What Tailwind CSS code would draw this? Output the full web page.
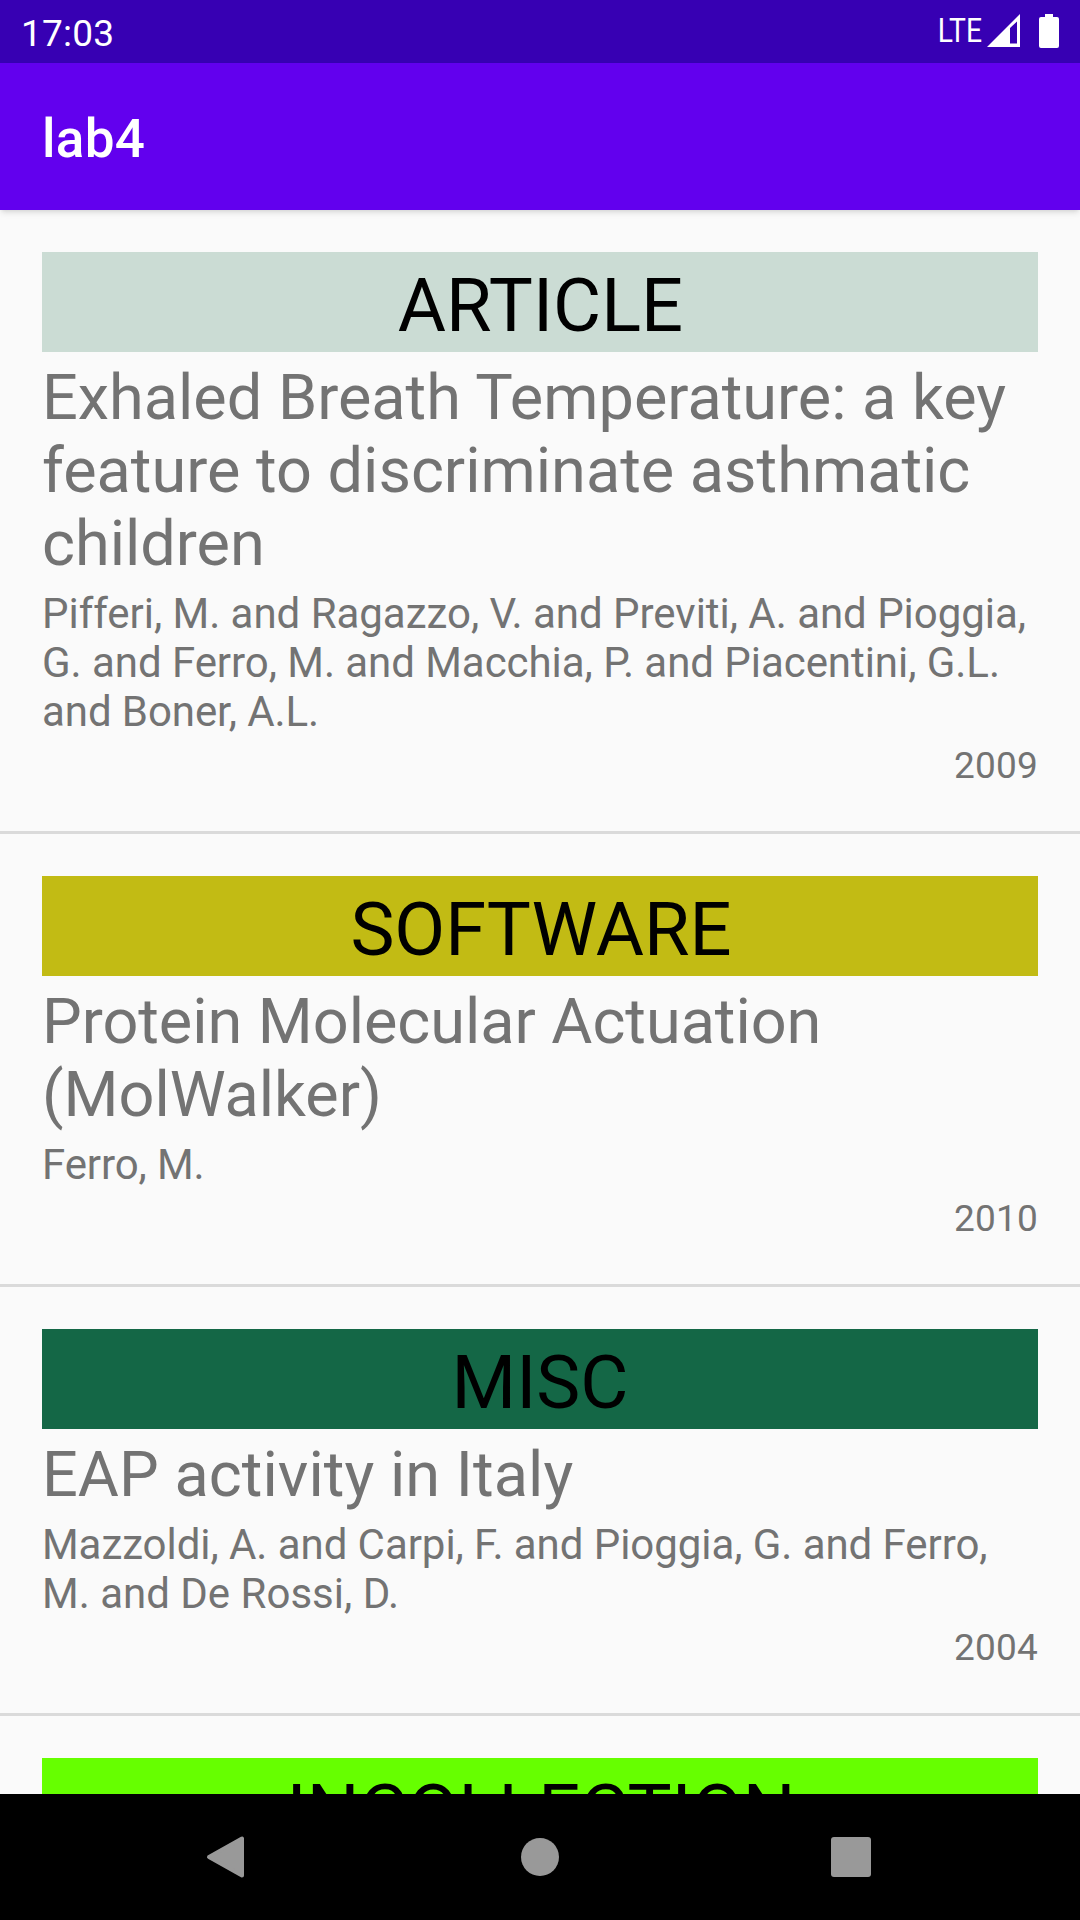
<!DOCTYPE html>
<html lang="en">
<head>
<meta charset="utf-8">
<title>lab4</title>
<script src="https://cdn.jsdelivr.net/npm/@tailwindcss/browser@4"></script>
</head>
<body class="w-[1080px] h-[1920px] overflow-hidden bg-[#fafafa] font-[Roboto,sans-serif] flex flex-col text-[#737373]">
<div class="h-[63px] shrink-0 bg-[#3700b3] text-white flex items-center pl-[21px] pr-[21px] pb-px">
  <span class="text-[37px] leading-[43px] pt-[4px] tracking-[0.2px]">17:03</span>
  <span class="ml-auto text-[32.5px] leading-[36px] origin-right scale-x-[0.87]">LTE</span>
  <svg class="ml-[5px]" width="34" height="34" viewBox="0 0 34 34"><path fill="#fff" fill-rule="evenodd" d="M33 0V33H0ZM23 14V29.5H30V7.500Z"/></svg>
  <svg class="ml-[18px]" width="20" height="34" viewBox="0 0 20 34"><path fill="#fff" d="M6 0h8v3h4q2 0 2 2v27q0 2-2 2H2q-2 0-2-2V5q0-2 2-2h4z"/></svg>
</div>
<header class="h-[147px] shrink-0 bg-[#6200ee] text-white flex items-center pl-[42px] shadow-md z-10">
  <h1 class="text-[53px] leading-[62px] font-medium pt-[5px] tracking-[0.3px]">lab4</h1>
</header>
<main class="flex-1 min-h-0 overflow-hidden">
  <article class="px-[42px] pt-[42px] pb-[44px] border-b-[3px] border-[#dadada]">
    <h2 class="h-[100px] bg-[#cbdcd4] text-black text-center text-[74px] leading-[108px] pl-px">ARTICLE</h2>
    <p class="pt-[9px] text-[63px] leading-[73px]">Exhaled Breath Temperature: a key<br>feature to discriminate asthmatic<br>children</p>
    <p class="pt-[9px] text-[42px] leading-[49px] tracking-[-0.03px]">Pifferi, M. and Ragazzo, V. and Previti, A. and Pioggia,<br><span class="tracking-[-0.05px]">G. and Ferro, M. and Macchia, P. and Piacentini, G.L.</span><br><span class="tracking-[-0.08px]">and Boner, A.L.</span></p>
    <p class="pt-[8px] text-[37px] leading-[43px] text-right tracking-[0.2px]">2009</p>
  </article>
  <article class="px-[42px] pt-[42px] pb-[44px] border-b-[3px] border-[#dadada]">
    <h2 class="h-[100px] bg-[#c2bb14] text-black text-center text-[74px] leading-[108px] pl-[2px]">SOFTWARE</h2>
    <p class="pt-[9px] text-[63px] leading-[73px] tracking-[-0.04px]">Protein Molecular Actuation<br>(MolWalker)</p>
    <p class="pt-[9px] text-[42px] leading-[49px] tracking-[-0.1px]">Ferro, M.</p>
    <p class="pt-[8px] text-[37px] leading-[43px] text-right tracking-[0.2px]">2010</p>
  </article>
  <article class="px-[42px] pt-[42px] pb-[44px] border-b-[3px] border-[#dadada]">
    <h2 class="h-[100px] bg-[#146746] text-black text-center text-[74px] leading-[108px]">MISC</h2>
    <p class="pt-[9px] text-[63px] leading-[73px] tracking-[0.05px]">EAP activity in Italy</p>
    <p class="pt-[9px] text-[42px] leading-[49px] tracking-[-0.06px]">Mazzoldi, A. and Carpi, F. and Pioggia, G. and Ferro,<br><span class="tracking-normal">M. and De Rossi, D.</span></p>
    <p class="pt-[8px] text-[37px] leading-[43px] text-right tracking-[0.2px]">2004</p>
  </article>
  <article class="px-[42px] pt-[42px]">
    <h2 class="h-[100px] bg-[#66ff00] text-black text-center text-[74px] leading-[108px] pl-[2px]">INCOLLECTION</h2>
  </article>
</main>
<nav class="h-[126px] shrink-0 bg-black flex items-center">
  <svg width="1080" height="126" viewBox="0 0 1080 126" fill="#999"><path stroke="#999" stroke-width="4" stroke-linejoin="round" d="M209 63 242 44.500V81.500Z"/><circle cx="540" cy="63" r="19"/><rect x="831" y="43" width="40" height="40" rx="3"/></svg>
</nav>
</body>
</html>
